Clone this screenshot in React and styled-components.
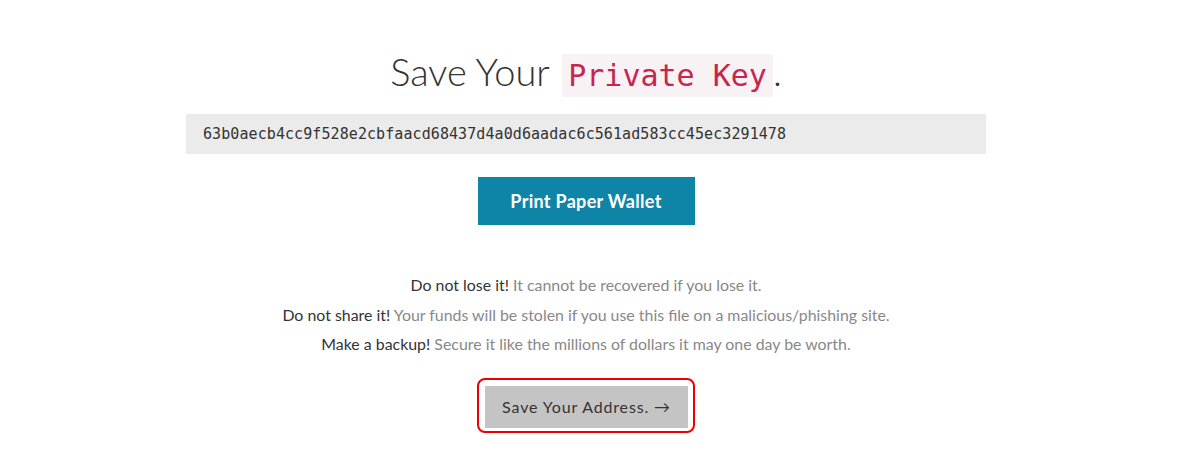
import React from 'react'
import styled, { createGlobalStyle } from 'styled-components'

const GlobalStyle = createGlobalStyle`
  body {
    margin: 0;
    background: #fff;
    font-family: Lato, "Open Sans", sans-serif;
    color: #333;
  }
`

const Page = styled.div`
  display: flex;
  flex-direction: column;
  align-items: center;
  width: 800px;
  margin-left: 186px;
  padding-top: 46px;
`

const Title = styled.h1`
  margin: 0;
  font-family: Lato, sans-serif;
  font-weight: 300;
  font-size: 38px;
  line-height: 50px;
  color: #333;
`

const Code = styled.code`
  font-family: "DejaVu Sans Mono", "Liberation Mono", monospace;
  font-size: 30px;
  color: #c7254e;
  background: #f9f2f4;
  padding: 4px 6px;
  margin-left: 3px;
`

const KeyBox = styled.div`
  align-self: stretch;
  margin-top: 13px;
  height: 40px;
  display: flex;
  align-items: center;
  padding: 0 17px;
  background: #ebebeb;
  font-family: "DejaVu Sans Mono", "Liberation Mono", monospace;
  font-size: 15px;
  letter-spacing: 0.08px;
  color: #333;
`

const Button = styled.button`
  font-family: Lato, sans-serif;
  border: none;
  cursor: pointer;
  background: ${p => (p.$primary ? '#0e85a6' : '#c4c4c4')};
  color: ${p => (p.$primary ? '#fff' : '#333')};
  font-weight: ${p => (p.$primary ? 700 : 400)};
  font-size: ${p => (p.$primary ? '18px' : '16px')};
  letter-spacing: ${p => (p.$primary ? '0.3px' : '0.85px')};
  height: ${p => (p.$primary ? '48px' : '42px')};
  padding: ${p => (p.$primary ? '0 20px' : '0 17px')};
`

const PrintButton = styled(Button)`
  margin-top: 23px;
  width: 217px;
`

const Notes = styled.div`
  margin-top: 45px;
  display: flex;
  flex-direction: column;
  align-items: center;
  font-size: 15.9px;
  line-height: 29.5px;
`

const Note = styled.p`
  margin: 0;
  color: #888;
  font-weight: 400;
  strong {
    color: #333;
    font-weight: 400;
  }
`

const Outline = styled.div`
  margin-top: 19px;
  border: 2px solid #ee0000;
  border-radius: 8px;
  padding: 6px 5px 3px 6px;
  display: flex;
`

const App = () => (
  <>
    <GlobalStyle />
    <Page>
      <Title>
        Save Your <Code>Private Key</Code>.
      </Title>
      <KeyBox>63b0aecb4cc9f528e2cbfaacd68437d4a0d6aadac6c561ad583cc45ec3291478</KeyBox>
      <PrintButton $primary>Print Paper Wallet</PrintButton>
      <Notes>
        <Note><strong>Do not lose it!</strong> It cannot be recovered if you lose it.</Note>
        <Note><strong>Do not share it!</strong> Your funds will be stolen if you use this file on a malicious/phishing site.</Note>
        <Note><strong>Make a backup!</strong> Secure it like the millions of dollars it may one day be worth.</Note>
      </Notes>
      <Outline>
        <Button>Save Your Address. →</Button>
      </Outline>
    </Page>
  </>
)

export default App
